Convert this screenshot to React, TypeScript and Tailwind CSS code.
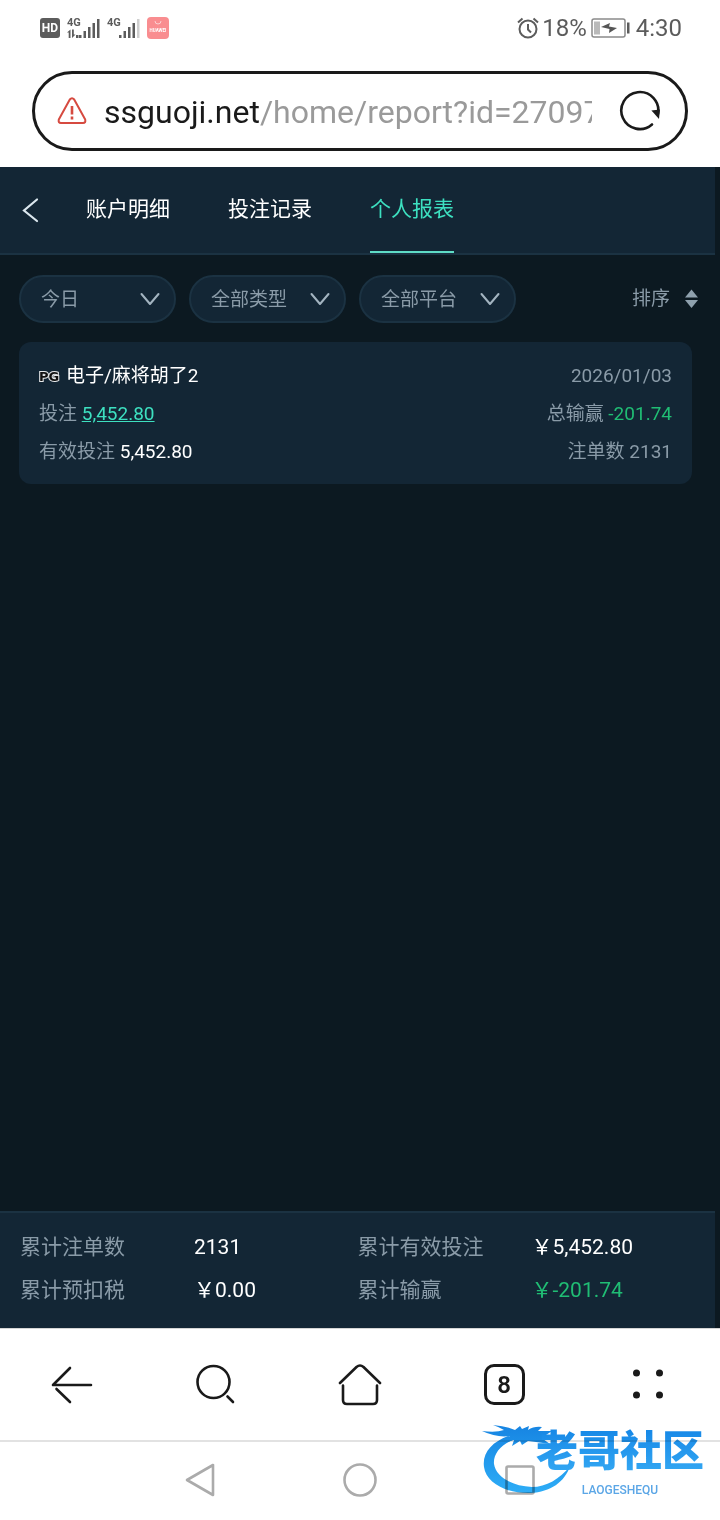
import { useState } from "react";

const tabs = ["账户明细", "投注记录", "个人报表"];

const filters = [
  { id: "date", label: "日期", options: ["今日", "昨日", "近七日"] },
  { id: "type", label: "类型", options: ["全部类型", "电子", "真人"] },
  { id: "platform", label: "平台", options: ["全部平台", "PG"] },
];

const totals = [
  { label: "累计注单数", value: "2131", color: "text-white" },
  { label: "累计有效投注", value: "￥5,452.80", color: "text-white" },
  { label: "累计预扣税", value: "￥0.00", color: "text-white" },
  { label: "累计输赢", value: "￥-201.74", color: "text-[#20bd74]" },
];

function Signal({ faded }: { faded?: boolean }) {
  return (
    <svg width="33" height="24" viewBox="0 0 33 24" fill="#5c5c5c" aria-hidden="true">
      <text x="0" y="10" fontSize="11" fontWeight="700" fontFamily="Roboto, sans-serif">4G</text>
      {!faded && (
        <path d="M0 16.500l3.500-3v8.500h-1.800v-5.500zM5 13.500h1.800v5h1.700l-3.500 3.500zM9 19h2.500v3h-2.500z" />
      )}
      <rect x="12" y="19" width="2.500" height="3" />
      <rect x="16.500" y="15" width="2.500" height="7" />
      <rect x="21" y="11" width="2.500" height="11" />
      <rect x="25.500" y="7" width="2.500" height="15" />
      <rect x="30" y="3" width="2.500" height="19" fill={faded ? "#cfcfcf" : "#5c5c5c"} />
    </svg>
  );
}

function StatusBar() {
  return (
    <div className="flex h-14 items-center justify-between pl-10 pr-[38px] text-[#5c5c5c]">
      <div className="flex items-center gap-[7px]">
        <span className="flex h-5 w-5 items-center justify-center rounded-[3px] bg-[#5c5c5c] text-xs font-bold text-white">HD</span>
        <Signal />
        <Signal faded />
        <svg width="22" height="22" viewBox="0 0 22 22" aria-hidden="true">
          <rect width="22" height="22" rx="4" fill="#f98d90" />
          <path d="M8 4a3 3 0 0 0 6 0" fill="none" stroke="#fbd0d1" />
          <text x="11" y="14.500" fontSize="4.500" fontWeight="700" fill="#fff" textAnchor="middle" fontFamily="Roboto, sans-serif">HUAWEI</text>
        </svg>
      </div>
      <div className="flex items-center text-2xl">
        <svg width="22" height="22" viewBox="0 0 22 22" fill="none" stroke="#5c5c5c" strokeWidth="2" className="mr-[3px]" aria-hidden="true">
          <circle cx="11" cy="12" r="8.500" />
          <path d="M11 7v5.500l3 3M1 5.500l4.500-4M21 5.500l-4.500-4" />
        </svg>
        <span>18%</span>
        <svg width="40" height="20" viewBox="0 0 40 20" className="ml-1 mr-[5px]" aria-hidden="true">
          <rect x="1" y="1" width="33" height="18" rx="2" fill="#fff" stroke="#8a8a8a" strokeWidth="1.500" />
          <rect x="3" y="3.500" width="6" height="13" fill="#b9b9b9" />
          <path d="M10 9l9-4-1 3.500 8 1.500-8 5 .500-4z" fill="#555" />
          <rect x="36" y="4.500" width="2.500" height="11" fill="#5c5c5c" />
        </svg>
        <span>4:30</span>
      </div>
    </div>
  );
}

function AddressBar() {
  return (
    <div className="px-8 pb-4 pt-[15px]">
      <div className="flex h-20 items-center rounded-full border-[3px] border-[#1a1a1a] pl-[22px] pr-6">
        <svg width="30" height="28" viewBox="0 0 30 28" fill="none" stroke="#d64a40" strokeWidth="2" strokeLinejoin="round" aria-hidden="true">
          <path d="M12.800 2.500q2.200-2.500 4.400 0l11 20q.8 3.500-2.200 3.500h-22q-3 0-2.200-3.500z" />
          <path d="M15 9v8.500M15 19.500v3" strokeWidth="2.600" />
        </svg>
        {/* long addresses run off under the reload button */}
        <div className="ml-[17px] min-w-0 flex-1 overflow-hidden whitespace-nowrap pt-[2px] text-[32px] leading-10 text-[#9a9a9a]">
          <span className="text-[#1a1a1a]">ssguoji.net</span>/home/report?id=27097
        </div>
        <button aria-label="刷新" className="ml-[27px]">
          <svg width="42" height="42" viewBox="0 0 42 42" fill="none" stroke="#1a1a1a" strokeWidth="2.600" strokeLinecap="round">
            <path d="M33 34.500A18.500 18.500 0 1 1 39 24" />
            <path d="M35 21.500l4 4.500.500-5z" fill="#1a1a1a" />
          </svg>
        </button>
      </div>
    </div>
  );
}

function ReportCard() {
  return (
    <article className="ml-[19px] mr-[23px] mt-[19px] rounded-xl bg-[#132635] px-5 pb-[13px] pt-[15px] text-[19px] leading-[38px] text-[#8a9ba8]">
      <div className="flex justify-between">
        <h2 className="flex items-center gap-[2px] text-white">
          <svg width="25" height="14" viewBox="0 0 25 14">
            <text x="0" y="12" fontSize="13" fontWeight="700" fontFamily="DejaVu Sans, sans-serif" fill="#111" stroke="#e5e7e9" strokeWidth="2" paintOrder="stroke">PG</text>
          </svg>
          电子/麻将胡了2
        </h2>
        <time>2026/01/03</time>
      </div>
      <div className="flex justify-between">
        <p>投注 <a href="#bets" className="text-[#3de0c0] underline">5,452.80</a></p>
        <p>总输赢 <span className="text-[#20bd74]">-201.74</span></p>
      </div>
      <div className="flex justify-between">
        <p>有效投注 <span className="text-white">5,452.80</span></p>
        <p>注单数 2131</p>
      </div>
    </article>
  );
}

function BrowserNav() {
  return (
    <nav className="grid h-28 grid-cols-5 items-center justify-items-center border-t border-[#d5d5d5] bg-white text-[#1a1a1a]">
      <button aria-label="后退">
        <svg width="44" height="44" viewBox="0 0 44 44" fill="none" stroke="currentColor" strokeWidth="2.600" strokeLinecap="round" strokeLinejoin="round">
          <path d="M20 5L3 22H41M6.500 26L20 39" />
        </svg>
      </button>
      <button aria-label="搜索">
        <svg width="44" height="44" viewBox="0 0 44 44" fill="none" stroke="currentColor" strokeWidth="2.600" strokeLinecap="round">
          <circle cx="19.500" cy="19" r="16" />
          <path d="M33.500 33.500L39 39" />
        </svg>
      </button>
      <button aria-label="主页">
        <svg width="44" height="44" viewBox="0 0 44 44" fill="none" stroke="currentColor" strokeWidth="2.600" strokeLinecap="round" strokeLinejoin="round">
          <path d="M2 20L18.500 4Q22 1 25.500 4L42 20" />
          <path d="M5 22.500V37Q5 41 9 41H35Q39 41 39 37V22.500" />
        </svg>
      </button>
      <button aria-label="标签页" className="flex h-[41px] w-[41px] items-center justify-center rounded-[10px] border-[3px] border-[#1a1a1a] text-2xl font-semibold">
        8
      </button>
      <button aria-label="菜单">
        <svg width="44" height="44" viewBox="0 0 44 44" fill="currentColor">
          <circle cx="10.500" cy="10" r="3.500" />
          <circle cx="33.500" cy="10" r="3.500" />
          <circle cx="10.500" cy="32" r="3.500" />
          <circle cx="33.500" cy="32" r="3.500" />
        </svg>
      </button>
    </nav>
  );
}

function Watermark() {
  return (
    <div className="pointer-events-none absolute bottom-[22px] right-4 h-20 w-[222px] mix-blend-multiply">
      <svg width="104" height="80" viewBox="0 0 104 80" aria-hidden="true">
        <defs>
          <linearGradient id="dragon" x1="0" y1="0" x2="0" y2="80" gradientUnits="userSpaceOnUse">
            <stop offset="0" stopColor="#1480e0" />
            <stop offset="1" stopColor="#2fb0f8" />
          </linearGradient>
        </defs>
        <g fill="url(#dragon)">
          {/* body */}
          <path d="M26 18C10 24 0 35 2 49C4 65 25 76 49 75C68 74 83 64 88 48C78 61 64 69 50 69C30 68 14 59 12 46C11 35 20 25 36 20Z" />
          {/* whiskers, head and horns */}
          <path d="M0 13Q14 15 22 12Q17 9 11 7Q24 8 33 12L38 8L40 11L47 8L46 12Q52 8 60 9L56 13L70 13L64 17L70 19L61 21L68 26L54 24L46 23L40 27L38 23L30 28L32 22L25 24L28 18Q15 20 0 13Z" />
        </g>
      </svg>
      <div className="absolute right-0 top-0 flex flex-col items-center">
        <div className="bg-linear-to-b from-[#0d80e4] to-[#39aef5] bg-clip-text pt-1 text-[42px] font-black leading-[60px] text-transparent">老哥社区</div>
        <div className="text-xs font-medium leading-4 text-[#5ba6e6]">LAOGESHEQU</div>
      </div>
    </div>
  );
}

function SystemNav() {
  return (
    <div className="relative h-20 border-t-2 border-[#e2e2e2] bg-white">
      <div className="mx-auto grid h-full w-2/3 grid-cols-3 items-center justify-items-center pb-[2px] text-[#ababab]">
        <button aria-label="返回">
          <svg width="36" height="36" viewBox="0 0 36 36" fill="none" stroke="currentColor" strokeWidth="2.600" strokeLinejoin="round">
            <path d="M31 3V33L5 18Z" />
          </svg>
        </button>
        <button aria-label="主屏幕">
          <svg width="36" height="36" viewBox="0 0 36 36" fill="none" stroke="currentColor" strokeWidth="2.600">
            <circle cx="18" cy="18" r="15.500" />
          </svg>
        </button>
        <button aria-label="最近任务">
          <svg width="36" height="36" viewBox="0 0 36 36" fill="none" stroke="currentColor" strokeWidth="2.600">
            <rect x="4.500" y="4.500" width="27" height="27" rx="1.500" />
          </svg>
        </button>
      </div>
      <Watermark />
    </div>
  );
}

export default function App() {
  const [activeTab, setActiveTab] = useState(2);

  return (
    <div className="flex min-h-screen flex-col bg-white font-[Roboto,'Noto_Sans_CJK_SC',sans-serif]">
      <StatusBar />
      <AddressBar />

      <main className="flex flex-1 flex-col bg-[#0c1921] pr-[5px]">
        <header className="flex h-[88px] border-b-2 border-[#1b3242] bg-[#132635] pl-5">
          <button aria-label="返回上一页" className="mr-[46px]">
            <svg width="20" height="26" viewBox="0 0 20 26" fill="none" stroke="#dbe7ee" strokeWidth="2.200" strokeLinecap="round">
              <path d="M17 2.500L4 13.500L17 24" />
            </svg>
          </button>
          <nav className="flex gap-[58px]">
            {tabs.map((tab, i) => (
              <button
                key={tab}
                onClick={() => setActiveTab(i)}
                className={`border-b-2 pt-[2px] text-[21px] ${i === activeTab ? "border-[#5fdcc6] text-[#3de0c0]" : "border-transparent text-white"}`}
              >
                {tab}
              </button>
            ))}
          </nav>
        </header>

        <div className="flex items-center justify-between pl-[19px] pr-[17px] pt-5 text-[19px] text-[#8a9ba8]">
          <div className="flex gap-[13px]">
            {filters.map((f) => (
              <div key={f.id} className="relative">
                <select
                  id={f.id}
                  aria-label={f.label}
                  className="h-12 w-[157px] appearance-none rounded-full border-2 border-[#1b3242] bg-[#132635] pl-5 pr-10 pt-[2px]"
                >
                  {f.options.map((o) => <option key={o}>{o}</option>)}
                </select>
                <svg width="20" height="14" viewBox="0 0 20 14" fill="none" stroke="#a3b4c0" strokeWidth="2" strokeLinecap="round" strokeLinejoin="round" className="pointer-events-none absolute right-4 top-[17px]">
                  <path d="M1.500 2L10 12L18.500 2" />
                </svg>
              </div>
            ))}
          </div>
          <button className="flex items-center gap-[15px]">
            排序
            <svg width="13" height="20" viewBox="0 0 13 20" fill="#8fa1ae">
              <path d="M6.500 0.500L13 8.500H0ZM0 11H13L6.500 19Z" />
            </svg>
          </button>
        </div>

        <ReportCard />

        <dl className="mt-auto grid grid-cols-2 border-t-2 border-[#1b3242] bg-[#132635] px-5 pb-4 pt-[13px] text-[21px] leading-[43px]">
          {totals.map((t) => (
            <div key={t.label} className="flex">
              <dt className="w-[174px] text-[#8a9ba8]">{t.label}</dt>
              <dd className={t.color}>{t.value}</dd>
            </div>
          ))}
        </dl>
      </main>

      <BrowserNav />
      <SystemNav />
    </div>
  );
}
